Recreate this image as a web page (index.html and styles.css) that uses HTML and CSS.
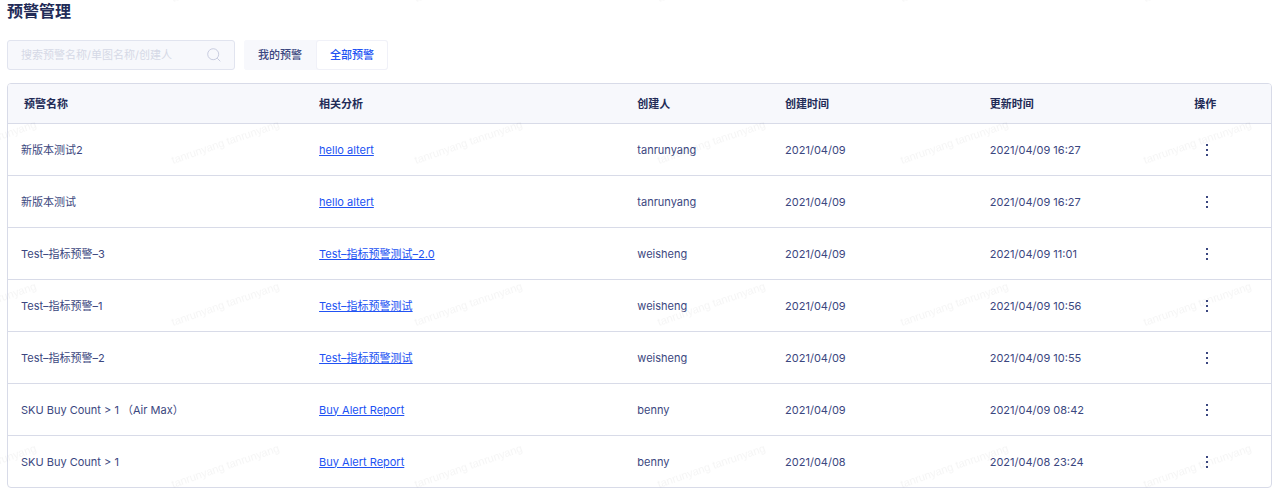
FILE: index.html
```html
<!DOCTYPE html>
<html lang="zh-CN">
<head>
<meta charset="utf-8">
<meta name="viewport" content="width=device-width, initial-scale=1">
<title>预警管理</title>
<link rel="stylesheet" href="styles.css">
</head>
<body>
<main class="page">
  <h1 class="title">预警管理</h1>

  <div class="toolbar">
    <label class="search">
      <input class="search-input" type="text" aria-label="搜索预警" placeholder="搜索预警名称/单图名称/创建人">
      <svg class="search-icon" viewBox="0 0 14 14" aria-hidden="true"><circle cx="6.2" cy="6.2" r="5.5"/><path d="M10.2 10.2 13.3 13.3"/></svg>
    </label>
    <div class="tabs">
      <button class="tab" type="button">我的预警</button>
      <button class="tab tab-active" type="button">全部预警</button>
    </div>
  </div>

  <table class="alerts">
    <colgroup>
      <col class="col-name"><col class="col-analysis"><col class="col-owner"><col class="col-created"><col class="col-updated"><col class="col-action">
    </colgroup>
    <thead>
      <tr><th>预警名称</th><th>相关分析</th><th>创建人</th><th>创建时间</th><th>更新时间</th><th>操作</th></tr>
    </thead>
    <tbody>
      <tr><td>新版本测试2</td><td><a class="link" href="#">hello altert</a></td><td>tanrunyang</td><td>2021/04/09</td><td>2021/04/09 16:27</td><td><button class="more" type="button" aria-label="更多操作"><svg class="dots" viewBox="0 0 2 12"><path d="M0 0h2v2H0zM0 5h2v2H0zM0 10h2v2H0z"/></svg></button></td></tr>
      <tr><td>新版本测试</td><td><a class="link" href="#">hello altert</a></td><td>tanrunyang</td><td>2021/04/09</td><td>2021/04/09 16:27</td><td><button class="more" type="button" aria-label="更多操作"><svg class="dots" viewBox="0 0 2 12"><path d="M0 0h2v2H0zM0 5h2v2H0zM0 10h2v2H0z"/></svg></button></td></tr>
      <tr><td>Test–指标预警–3</td><td><a class="link" href="#">Test–指标预警测试–2.0</a></td><td>weisheng</td><td>2021/04/09</td><td>2021/04/09 11:01</td><td><button class="more" type="button" aria-label="更多操作"><svg class="dots" viewBox="0 0 2 12"><path d="M0 0h2v2H0zM0 5h2v2H0zM0 10h2v2H0z"/></svg></button></td></tr>
      <tr><td>Test–指标预警–1</td><td><a class="link" href="#">Test–指标预警测试</a></td><td>weisheng</td><td>2021/04/09</td><td>2021/04/09 10:56</td><td><button class="more" type="button" aria-label="更多操作"><svg class="dots" viewBox="0 0 2 12"><path d="M0 0h2v2H0zM0 5h2v2H0zM0 10h2v2H0z"/></svg></button></td></tr>
      <tr><td>Test–指标预警–2</td><td><a class="link" href="#">Test–指标预警测试</a></td><td>weisheng</td><td>2021/04/09</td><td>2021/04/09 10:55</td><td><button class="more" type="button" aria-label="更多操作"><svg class="dots" viewBox="0 0 2 12"><path d="M0 0h2v2H0zM0 5h2v2H0zM0 10h2v2H0z"/></svg></button></td></tr>
      <tr><td>SKU Buy Count &gt; 1 （Air Max）</td><td><a class="link" href="#">Buy Alert Report</a></td><td>benny</td><td>2021/04/09</td><td>2021/04/09 08:42</td><td><button class="more" type="button" aria-label="更多操作"><svg class="dots" viewBox="0 0 2 12"><path d="M0 0h2v2H0zM0 5h2v2H0zM0 10h2v2H0z"/></svg></button></td></tr>
      <tr><td>SKU Buy Count &gt; 1</td><td><a class="link" href="#">Buy Alert Report</a></td><td>benny</td><td>2021/04/08</td><td>2021/04/08 23:24</td><td><button class="more" type="button" aria-label="更多操作"><svg class="dots" viewBox="0 0 2 12"><path d="M0 0h2v2H0zM0 5h2v2H0zM0 10h2v2H0z"/></svg></button></td></tr>
    </tbody>
  </table>
</main>

<svg class="watermark" aria-hidden="true">
  <defs>
    <pattern id="wm" width="243" height="162" patternUnits="userSpaceOnUse" patternTransform="translate(-80 4)">
      <text class="watermark-text" transform="translate(10 160) rotate(-19)">tanrunyang tanrunyang</text>
      <text class="watermark-text" transform="translate(10 -2) rotate(-19)">tanrunyang tanrunyang</text>
    </pattern>
  </defs>
  <rect width="100%" height="100%" fill="url(#wm)"/>
</svg>
</body>
</html>
```
FILE: styles.css
```css
* {
  box-sizing: border-box;
}

body {
  position: relative;
  margin: 0;
  background: #fff;
  color: #3b4780;
  font: 11px/16px Inter, "Noto Sans CJK SC", sans-serif;
}

.page {
  padding: 0 8px 7px 7px;
}

.title {
  margin: 0;
  color: #222b57;
  font-size: 16px;
  font-weight: 600;
  line-height: 22px;
}

.toolbar {
  display: flex;
  gap: 9px;
  margin: 18px 0 13px;
}

.search {
  display: flex;
  align-items: center;
  width: 228px;
  height: 30px;
  padding: 0 13px;
  border: 1px solid #e1e4ef;
  border-radius: 3px;
  background: #f7f8fc;
}

.search-input {
  flex: 1;
  min-width: 0;
  padding: 0;
  border: 0;
  outline: 0;
  background: transparent;
  color: inherit;
  font: inherit;
}

.search-input::placeholder {
  color: #d5d8e6;
  opacity: 1;
}

.search-icon {
  width: 14px;
  height: 14px;
  fill: none;
  stroke: #c9cde0;
}

.tabs {
  display: flex;
  border-radius: 3px;
  background: #f7f8fc;
}

.tab {
  padding: 0 13px;
  border: 1px solid #f7f8fc;
  border-radius: 3px;
  background: transparent;
  color: #3b4780;
  font: inherit;
  font-weight: 500;
  cursor: pointer;
}

.tab-active {
  border-color: #f0f1f8;
  background: #fff;
  color: #2152f3;
}

.alerts {
  width: 100%;
  border: 1px solid #d8dbe8;
  border-radius: 4px;
  border-spacing: 0;
  table-layout: fixed;
  overflow: hidden;
}

.col-name { width: 23.6%; }
.col-analysis { width: 25.2%; }
.col-owner { width: 11.7%; }
.col-created { width: 16.2%; }
.col-updated { width: 16.2%; }
.col-action { width: 7.1%; }

.alerts th,
.alerts td {
  padding: 0 13px;
  border-bottom: 1px solid #d8dbe8;
  text-align: left;
}

.alerts th {
  height: 40px;
  background: #f7f8fc;
  color: #222b57;
  font-weight: 600;
}

.alerts th:first-child {
  padding-left: 16px;
}

.alerts td {
  height: 52px;
}

.alerts tbody tr:last-child td {
  height: 51px;
  border-bottom: 0;
}

.link {
  color: #2152f3;
  text-decoration: underline;
}

.more {
  display: flex;
  align-items: center;
  justify-content: center;
  width: 26px;
  height: 26px;
  padding: 0;
  border: 0;
  background: transparent;
  cursor: pointer;
}

.dots {
  width: 2px;
  height: 12px;
  fill: #3b4780;
}

.watermark {
  position: absolute;
  inset: 0;
  width: 100%;
  height: 100%;
  pointer-events: none;
}

.watermark-text {
  fill: #000;
  fill-opacity: 0.04;
  font-family: "Liberation Sans", sans-serif;
  font-size: 11px;
}
```
